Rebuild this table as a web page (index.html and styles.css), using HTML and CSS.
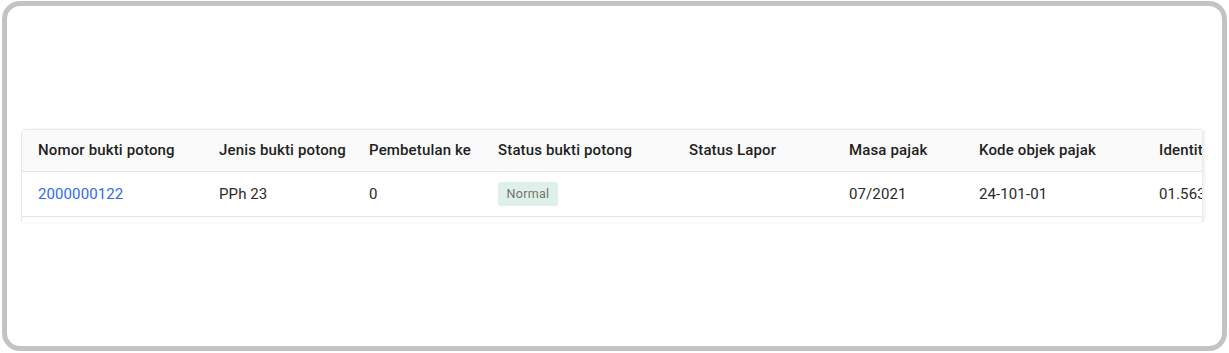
FILE: index.html
```html
<!DOCTYPE html>
<html lang="id">
<head>
<meta charset="utf-8">
<title>Bukti potong</title>
<link rel="stylesheet" href="styles.css">
</head>
<body>
<div class="frame">
  <div class="card">
    <table class="grid">
      <colgroup>
        <col class="c1"><col class="c2"><col class="c3"><col class="c4">
        <col class="c5"><col class="c6"><col class="c7"><col class="c8">
      </colgroup>
      <thead>
        <tr>
          <th>Nomor bukti potong</th>
          <th>Jenis bukti potong</th>
          <th>Pembetulan ke</th>
          <th>Status bukti potong</th>
          <th>Status Lapor</th>
          <th>Masa pajak</th>
          <th>Kode objek pajak</th>
          <th>Identitas penerima</th>
        </tr>
      </thead>
      <tbody>
        <tr>
          <td><a class="link" href="#">2000000122</a></td>
          <td>PPh 23</td>
          <td>0</td>
          <td><span class="badge">Normal</span></td>
          <td></td>
          <td>07/2021</td>
          <td>24-101-01</td>
          <td>01.563.421.5-012.000</td>
        </tr>
      </tbody>
    </table>
  </div>
</div>
</body>
</html>
```
FILE: styles.css
```css
* { box-sizing: border-box; }
html, body { margin: 0; padding: 0; background: #fff; }
body {
  width: 1229px;
  height: 353px;
  font-family: Roboto, "Liberation Sans", sans-serif;
  padding: 1px 2px 2px 2px;
}
.frame {
  width: 1225px;
  height: 350px;
  border: 5px solid #c3c3c3;
  border-radius: 18px;
  padding: 123px 0 0 14px;
}
.card {
  width: 1182px;
  height: 93px;
  border: 1px solid #e9e9e9;
  border-bottom: none;
  border-radius: 4px 4px 0 0;
  overflow: hidden;
  box-shadow: 2px 0 3px rgba(0,0,0,0.06);
}
.grid {
  border-collapse: collapse;
  table-layout: fixed;
  width: 1340px;
}
.c1 { width: 181px; }
.c2 { width: 150px; }
.c3 { width: 129px; }
.c4 { width: 191px; }
.c5 { width: 160px; }
.c6 { width: 130px; }
.c7 { width: 180px; }
.c8 { width: 219px; }
.grid th {
  height: 41px;
  background: #fafafa;
  color: #1f1f1f;
  font-weight: 500;
  font-size: 15px;
  text-align: left;
  padding: 0 0 0 16px;
  border-bottom: 1px solid #e6e6e6;
  white-space: nowrap;
  overflow: hidden;
  letter-spacing: 0.15px;
}
.grid td {
  height: 45px;
  color: #2a2a2a;
  font-size: 15px;
  padding: 0 0 0 16px;
  border-bottom: 1px solid #e6e6e6;
  white-space: nowrap;
  overflow: hidden;
  letter-spacing: 0.1px;
}
.link { color: #2f6ae8; text-decoration: none; }
.badge {
  display: inline-block;
  width: 60px;
  height: 24px;
  line-height: 24px;
  text-align: center;
  background: #dff0ea;
  color: #737373;
  font-size: 12.5px;
  border-radius: 3px;
  letter-spacing: 0.3px;
}
```
